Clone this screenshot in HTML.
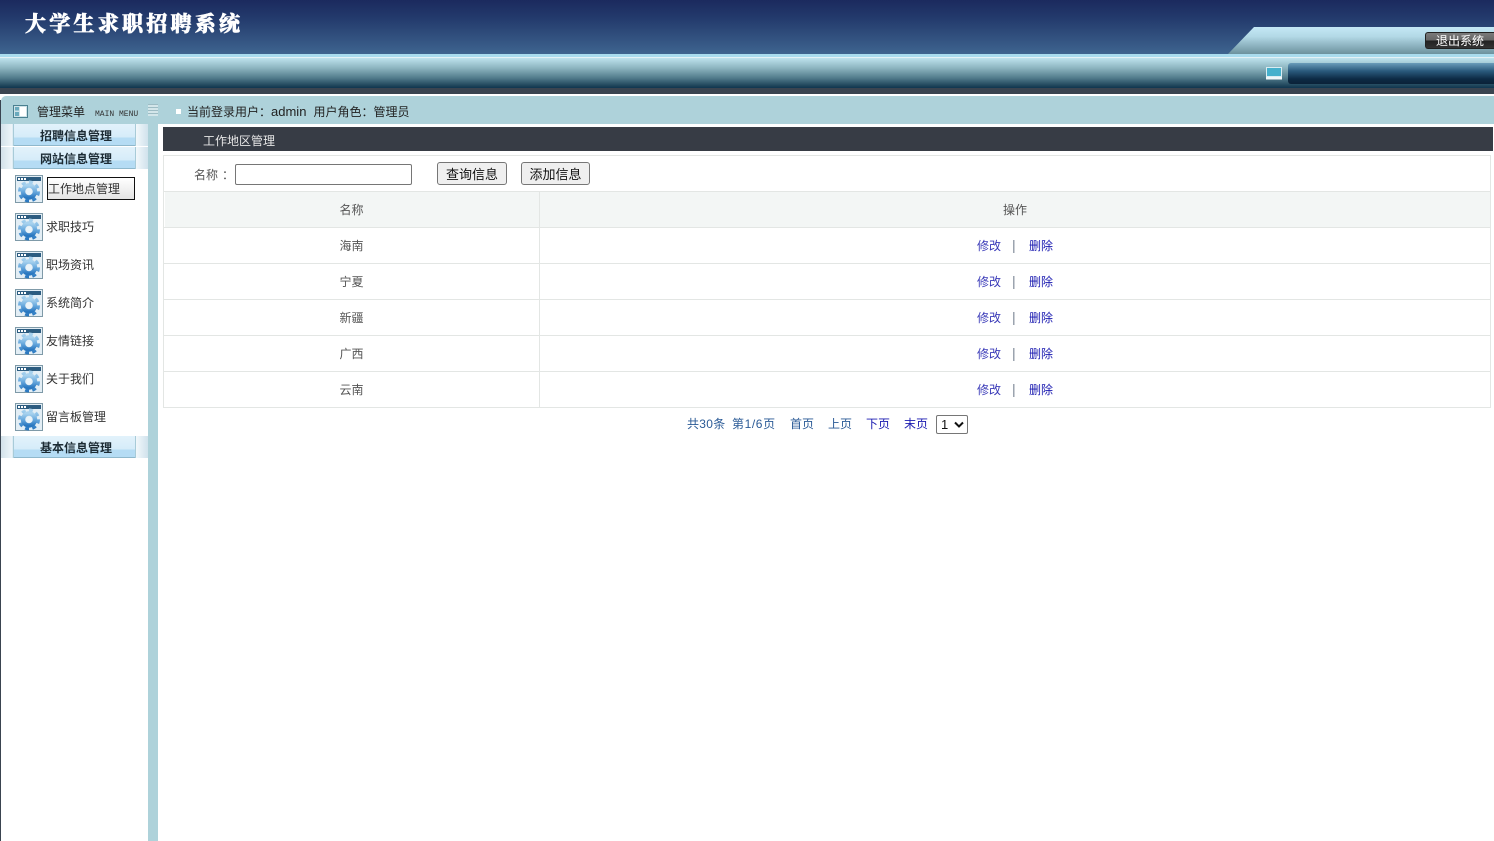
<!DOCTYPE html>
<html lang="zh">
<head>
<meta charset="utf-8">
<title>大学生求职招聘系统</title>
<style>
html,body{margin:0;padding:0;background:#fff;}
body{width:1494px;height:841px;overflow:hidden;position:relative;font-family:"Liberation Sans","Noto Sans CJK SC",sans-serif;font-size:12px;color:#222;}
.a{position:absolute;white-space:nowrap;}
.cell{position:absolute;text-align:center;color:#555;line-height:16px;white-space:nowrap;}
.lnk{color:#1a1ab0;}
.sep{font-size:14px;color:#7d8896;margin-top:-1px;}
.mh{position:absolute;left:1px;width:147px;height:22px;background:linear-gradient(90deg,#d3e2ea 0,#edf5f9 11px,#cfe2ee 12px,#cfe2ee 134px,#f2f8fb 135px,#d0e2ec 147px);}
.mh i{position:absolute;left:12px;top:0;width:123px;height:22px;background:linear-gradient(#e2f2fb 0,#d6ecf9 13px,#b5dcf4 14px,#b5dcf4 21px,#8fb8cc 21px);border-left:1px solid #a8cbd8;border-right:1px solid #a8cbd8;box-sizing:border-box;}
.mh b{position:absolute;left:0;width:150px;text-align:center;top:4px;line-height:16px;font-size:12px;color:#1c2b34;font-weight:bold;}
.ic{position:absolute;left:15px;width:28px;height:28px;}
.mt{position:absolute;left:46px;line-height:16px;color:#333;white-space:nowrap;}
</style>
</head>
<body>
<!-- top banner -->
<div class="a" style="left:0;top:0;width:1494px;height:54px;background:linear-gradient(#1b2a5e 0,#233a6c 18px,#3e648f 54px);"></div>
<div class="a" style="left:25px;top:8px;font-family:'Noto Serif CJK SC',serif;font-weight:900;font-size:21px;line-height:30px;letter-spacing:3.25px;color:#fff;-webkit-text-stroke:.6px #fff;">大学生求职招聘系统</div>
<svg class="a" style="left:1228px;top:27px" width="266" height="27"><defs><linearGradient id="g1" x1="0" y1="0" x2="0" y2="1"><stop offset="0" stop-color="#c4e8f6"/><stop offset=".35" stop-color="#b3d9e6"/><stop offset="1" stop-color="#6c929e"/></linearGradient></defs><polygon points="0,27 26,0 266,0 266,27" fill="url(#g1)"/></svg>
<div class="a" style="left:1425px;top:32px;width:69px;height:17px;box-sizing:border-box;border:1px solid #222;border-right:0;border-radius:3px 0 0 3px;background:linear-gradient(#7a7a7a 0,#666 7px,#222 8px,#333 15px);text-align:center;color:#fff;font-size:12px;line-height:16px;">退出系统</div>
<!-- nav strip -->
<div class="a" style="left:0;top:54px;width:1494px;height:3px;background:#a9dcee;"></div>
<div class="a" style="left:0;top:57px;width:1494px;height:1px;background:#e4f2f6;"></div>
<div class="a" style="left:0;top:58px;width:1494px;height:30px;background:linear-gradient(#bfe3ee 0,#8db5c0 10px,#517b8b 20px,#1c4258 28px,#0e3650 30px);"></div>
<div class="a" style="left:0;top:88px;width:1494px;height:6px;background:#3a4450;"></div>
<div class="a" style="left:1288px;top:63px;width:206px;height:21px;border-radius:3px 0 0 3px;background:linear-gradient(#6a9cba 0,#2a5a7c 8px,#0c2a44 16px,#0b2238 21px);"></div>
<svg class="a" style="left:1266px;top:67px" width="16" height="13"><rect x=".5" y=".5" width="15" height="9" fill="#45b0cc" stroke="#d8ecf2"/><rect x="0" y="10" width="16" height="2.5" fill="#eef6f8"/></svg>
<!-- title bar -->
<div class="a" style="left:0;top:94px;width:1494px;height:747px;background:#fff;border-radius:6px 0 0 0;"></div>
<div class="a" style="left:1px;top:96px;width:1493px;height:28px;background:#aed2da;border-radius:5px 0 0 0;"></div>
<div class="a" style="left:0;top:100px;width:1px;height:741px;background:#3a4450;"></div>
<svg class="a" style="left:13px;top:105px" width="15" height="13"><rect x=".5" y=".5" width="14" height="12" fill="#cfe3e8" stroke="#4a8090"/><rect x="2" y="2" width="4" height="3.5" fill="#6aaabd"/><rect x="2" y="7" width="4" height="4" fill="#6aaabd"/><rect x="7" y="2" width="6" height="9" fill="#fff"/></svg>
<div class="a" style="left:37px;top:104px;line-height:16px;color:#222;">管理菜单</div>
<div class="a" style="left:95px;top:109px;font-family:'Liberation Mono',monospace;font-size:8px;line-height:11px;color:#333;">MAIN MENU</div>
<div class="a" style="left:148px;top:104px;width:10px;height:12px;background:repeating-linear-gradient(#9dbcc4 0,#9dbcc4 1px,#d3e6ea 1px,#d3e6ea 3px);"></div>
<div class="a" style="left:176px;top:109px;width:5px;height:5px;background:#fff;"></div>
<div class="a" style="left:187px;top:104px;line-height:16px;color:#222;font-size:12px;">当前登录用户：<span style="font-size:13px">admin</span><span style="margin-left:7px">用户角色：管理员</span></div>
<!-- sidebar -->
<div class="a" style="left:148px;top:124px;width:10px;height:717px;background:#aed2da;"></div>
<div class="mh" style="top:124px"><i></i><b>招聘信息管理</b></div>
<div class="mh" style="top:147px"><i></i><b>网站信息管理</b></div>
<div class="mh" style="top:436px"><i></i><b>基本信息管理</b></div>
<svg width="0" height="0" style="position:absolute"><defs>
<linearGradient id="gg" x1="0" y1="0" x2="0" y2="1"><stop offset="0" stop-color="#a8d2ee"/><stop offset=".5" stop-color="#6aaade"/><stop offset="1" stop-color="#2a78c0"/></linearGradient>
<symbol id="gear" viewBox="0 0 28 28">
<rect x=".5" y=".5" width="27" height="27" fill="#e3eef5" stroke="#7f9aa8"/>
<rect x="2" y="2" width="24" height="4" fill="#2c5c80"/>
<rect x="3" y="3" width="2" height="2" fill="#fff"/><rect x="6" y="3" width="2" height="2" fill="#fff"/><rect x="9" y="3" width="2" height="2" fill="#fff"/>
<circle cx="14" cy="16.5" r="9.5" fill="none" stroke="url(#gg)" stroke-width="3" stroke-dasharray="4 3.4"/>
<circle cx="14" cy="16.5" r="6" fill="none" stroke="url(#gg)" stroke-width="4.4"/>
<circle cx="14" cy="16.5" r="3" fill="#eaf4fa"/>
</symbol></defs></svg>
<svg class="ic" style="top:175px"><use href="#gear"/></svg>
<svg class="ic" style="top:213px"><use href="#gear"/></svg>
<svg class="ic" style="top:251px"><use href="#gear"/></svg>
<svg class="ic" style="top:289px"><use href="#gear"/></svg>
<svg class="ic" style="top:327px"><use href="#gear"/></svg>
<svg class="ic" style="top:365px"><use href="#gear"/></svg>
<svg class="ic" style="top:403px"><use href="#gear"/></svg>
<div class="a" style="left:47px;top:177px;width:86px;height:21px;border:1px solid #111;background:linear-gradient(#fff,#e4e4e4);"></div>
<div class="mt" style="top:181px;left:48px">工作地点管理</div>
<div class="mt" style="top:219px">求职技巧</div>
<div class="mt" style="top:257px">职场资讯</div>
<div class="mt" style="top:295px">系统简介</div>
<div class="mt" style="top:333px">友情链接</div>
<div class="mt" style="top:371px">关于我们</div>
<div class="mt" style="top:409px">留言板管理</div>
<!-- content header -->
<div class="a" style="left:163px;top:127px;width:1330px;height:24px;background:#373c45;"></div>
<div class="a" style="left:203px;top:133px;line-height:16px;color:#e6e6e6;">工作地区管理</div>
<!-- table frame -->
<div class="a" style="left:163px;top:155px;width:1328px;height:253px;border:1px solid #e3e6e4;box-sizing:border-box;"></div>
<div class="a" style="left:165px;top:192px;width:1325px;height:35px;background:#f3f6f5;"></div>
<div class="a" style="left:164px;top:191px;width:1326px;height:1px;background:#e3e6e4;"></div>
<div class="a" style="left:164px;top:227px;width:1326px;height:1px;background:#e3e6e4;"></div>
<div class="a" style="left:164px;top:263px;width:1326px;height:1px;background:#e3e6e4;"></div>
<div class="a" style="left:164px;top:299px;width:1326px;height:1px;background:#e3e6e4;"></div>
<div class="a" style="left:164px;top:335px;width:1326px;height:1px;background:#e3e6e4;"></div>
<div class="a" style="left:164px;top:371px;width:1326px;height:1px;background:#e3e6e4;"></div>
<div class="a" style="left:539px;top:192px;width:1px;height:215px;background:#e3e6e4;"></div>
<!-- search row -->
<div class="a" style="left:194px;top:167px;line-height:16px;color:#555;">名称<span style="margin-left:4px">：</span></div>
<div class="a" style="left:235px;top:164px;width:177px;height:21px;box-sizing:border-box;border:1px solid #767676;border-radius:2px;background:#fff;"></div>
<div class="a" style="left:437px;top:162px;width:70px;height:23px;box-sizing:border-box;border:1px solid #767676;border-radius:3px;background:#efefef;text-align:center;font-size:13px;line-height:23px;color:#111;">查询信息</div>
<div class="a" style="left:521px;top:162px;width:69px;height:23px;box-sizing:border-box;border:1px solid #767676;border-radius:3px;background:#efefef;text-align:center;font-size:13px;line-height:23px;color:#111;">添加信息</div>
<!-- rows -->
<div class="cell" style="left:164px;width:375px;top:202px">名称</div>
<div class="cell" style="left:540px;width:950px;top:202px">操作</div>
<div class="cell" style="left:164px;width:375px;top:238px">海南</div>
<div class="cell" style="left:164px;width:375px;top:274px">宁夏</div>
<div class="cell" style="left:164px;width:375px;top:310px">新疆</div>
<div class="cell" style="left:164px;width:375px;top:346px">广西</div>
<div class="cell" style="left:164px;width:375px;top:382px">云南</div>
<div class="a lnk" style="left:977px;top:238px;line-height:16px;color:#3a3ab8">修改</div><div class="a sep" style="left:1012px;top:238px;line-height:16px">|</div><div class="a lnk" style="left:1029px;top:238px;line-height:16px">删除</div>
<div class="a lnk" style="left:977px;top:274px;line-height:16px;color:#3a3ab8">修改</div><div class="a sep" style="left:1012px;top:274px;line-height:16px">|</div><div class="a lnk" style="left:1029px;top:274px;line-height:16px">删除</div>
<div class="a lnk" style="left:977px;top:310px;line-height:16px;color:#3a3ab8">修改</div><div class="a sep" style="left:1012px;top:310px;line-height:16px">|</div><div class="a lnk" style="left:1029px;top:310px;line-height:16px">删除</div>
<div class="a lnk" style="left:977px;top:346px;line-height:16px;color:#3a3ab8">修改</div><div class="a sep" style="left:1012px;top:346px;line-height:16px">|</div><div class="a lnk" style="left:1029px;top:346px;line-height:16px">删除</div>
<div class="a lnk" style="left:977px;top:382px;line-height:16px;color:#3a3ab8">修改</div><div class="a sep" style="left:1012px;top:382px;line-height:16px">|</div><div class="a lnk" style="left:1029px;top:382px;line-height:16px">删除</div>
<!-- pager -->
<div class="a" style="left:687px;top:416px;line-height:16px;color:#2a5a96;letter-spacing:.3px">共30条</div>
<div class="a" style="left:732px;top:416px;line-height:16px;color:#2a5a96;letter-spacing:.6px">第1/6页</div>
<div class="a" style="left:790px;top:416px;line-height:16px;color:#2a5a96">首页</div>
<div class="a" style="left:828px;top:416px;line-height:16px;color:#2a5a96">上页</div>
<div class="a" style="left:866px;top:416px;line-height:16px;color:#1a1ab0">下页</div>
<div class="a" style="left:904px;top:416px;line-height:16px;color:#1a1ab0">末页</div>
<div class="a" style="left:936px;top:415px;width:32px;height:19px;box-sizing:border-box;border:1px solid #767676;border-radius:2px;background:#fff;font-size:13px;line-height:17px;padding-left:4px;color:#111;">1<svg style="position:absolute;left:17px;top:5px" width="10" height="7"><path d="M1 1.5 L5 5.5 L9 1.5" fill="none" stroke="#111" stroke-width="2"/></svg></div>
</body>
</html>
